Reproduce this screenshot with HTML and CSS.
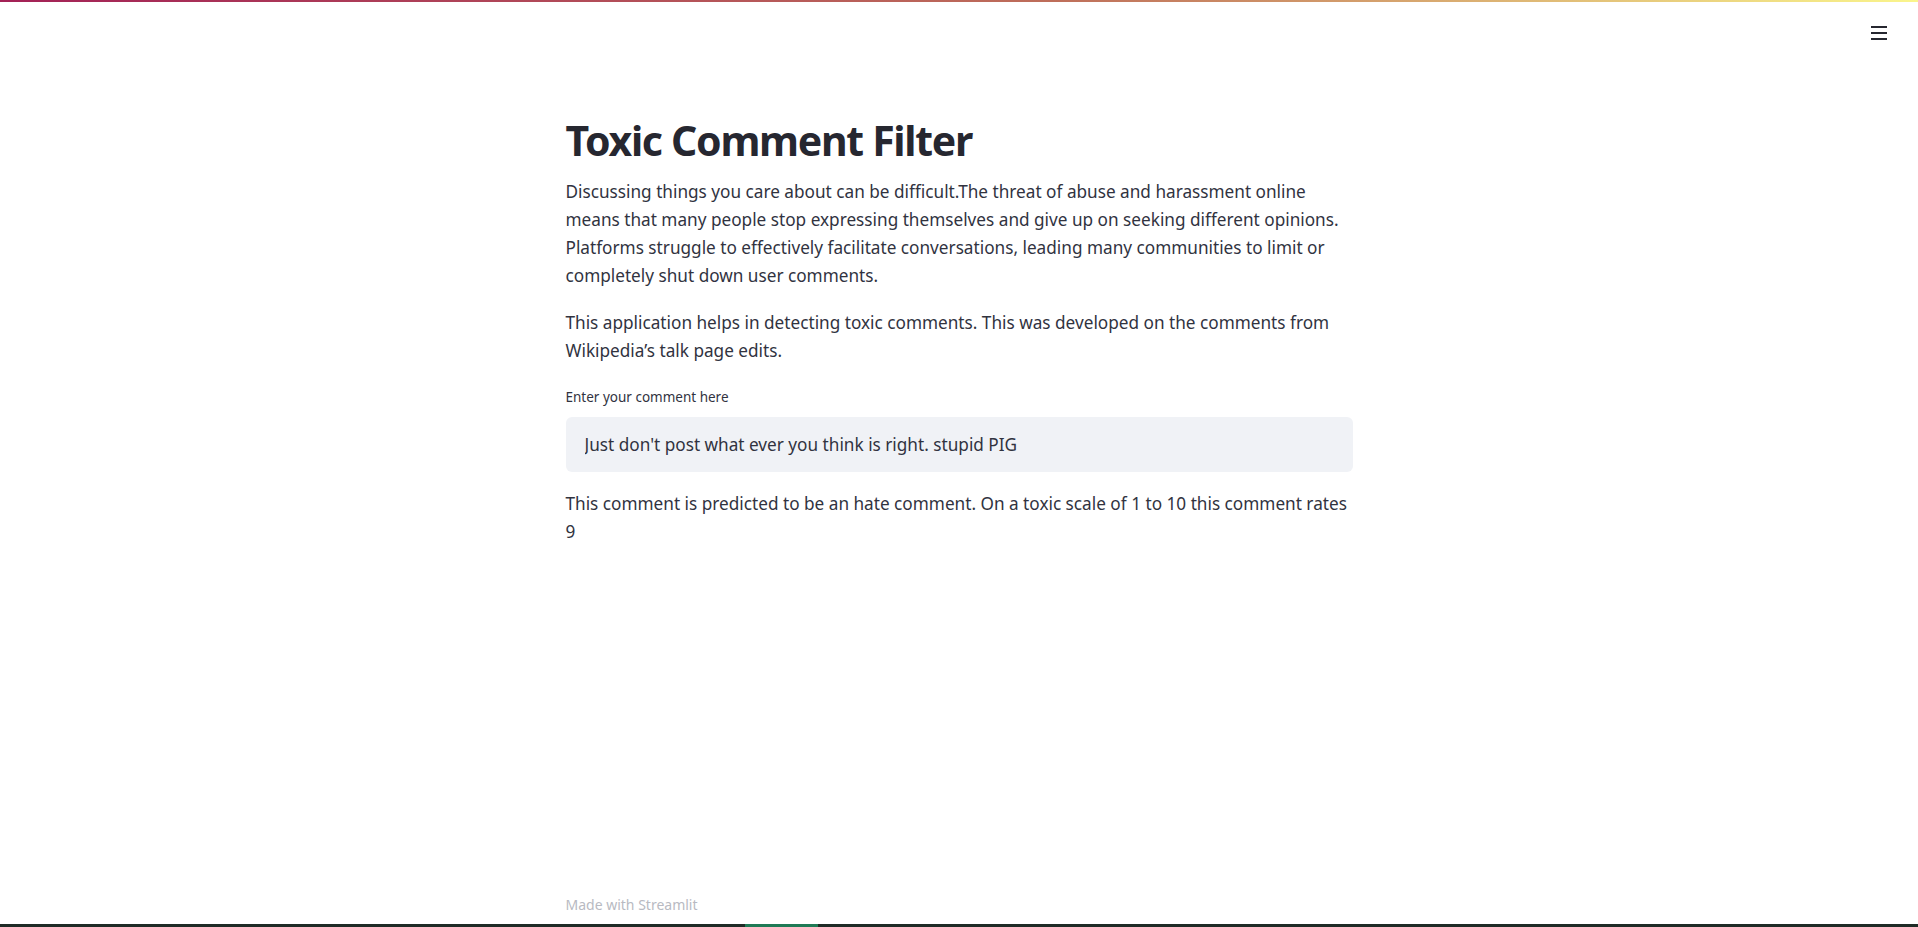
FILE: index.html
```html
<!DOCTYPE html>
<html lang="en">
<head>
<meta charset="utf-8">
<title>Toxic Comment Filter</title>
<link rel="stylesheet" href="styles.css">
</head>
<body>
<div class="app">
  <div class="decoration"></div>
  <header class="header">
    <button class="menu-btn" aria-label="Menu">
      <svg width="16" height="14" viewBox="0 0 16 14">
        <rect x="0" y="0" width="16" height="2" fill="#262730"/>
        <rect x="0" y="6" width="16" height="2" fill="#262730"/>
        <rect x="0" y="12" width="16" height="2" fill="#262730"/>
      </svg>
    </button>
  </header>
  <main class="main">
    <div class="block">
      <h1 class="title">Toxic Comment Filter</h1>
      <p class="para">Discussing things you care about can be difficult.The threat of abuse and harassment online means that many people stop expressing themselves and give up on seeking different opinions. Platforms struggle to effectively facilitate conversations, leading many communities to limit or completely shut down user comments.</p>
      <p class="para">This application helps in detecting toxic comments. This was developed on the comments from Wikipedia’s talk page edits.</p>
      <label class="label" for="comment">Enter your comment here</label>
      <input class="comment-input" id="comment" type="text" value="Just don't post what ever you think is right. stupid PIG">
      <p class="para result">This comment is predicted to be an hate comment. On a toxic scale of 1 to 10 this comment rates 9</p>
    </div>
  </main>
  <footer class="footer">
    <div class="block footer-text">Made with Streamlit</div>
  </footer>
  <div class="taskbar"><div class="taskbar-active"></div></div>
</div>
</body>
</html>
```
FILE: styles.css
```css
* { box-sizing: border-box; }
html, body { margin: 0; padding: 0; background: #ffffff; }
body {
  font-family: "Noto Sans", "Open Sans", sans-serif;
  color: rgb(49, 51, 63);
}
.app {
  min-height: 927px;
  display: flex;
  flex-direction: column;
}
.decoration {
  height: 2px;
  background: linear-gradient(90deg, rgb(163, 33, 86) 0%, rgb(190, 110, 90) 55%, rgb(250, 245, 140) 100%);
}
.header {
  height: 48px;
  display: flex;
  justify-content: flex-end;
  align-items: flex-start;
  padding: 22px 28px 0 0;
}
.menu-btn {
  border: none;
  background: transparent;
  padding: 2px 3px;
  display: flex;
  cursor: pointer;
}
.main { flex: 1; padding-top: 65px; }
.block {
  width: 787px;
  margin: 0 auto;
}
.title {
  margin: 0 0 13px 0;
  font-size: 41px;
  line-height: 50px;
  font-weight: 700;
  color: rgb(38, 39, 48);
  letter-spacing: -1.3px;
}
.para {
  margin: 0 0 19px 0;
  font-size: 17.2px;
  line-height: 28px;
}
.label {
  display: block;
  font-size: 13.5px;
  line-height: 20px;
  margin-top: 22px;
  margin-bottom: 10px;
  color: rgb(49, 51, 63);
}
.comment-input {
  display: block;
  width: 100%;
  height: 55px;
  border: none;
  outline: none;
  border-radius: 6px;
  background: rgb(240, 242, 246);
  padding: 0 19px;
  font-family: "Noto Sans", "Open Sans", sans-serif;
  font-size: 17.2px;
  color: rgb(49, 51, 63);
  margin-bottom: 18px;
}
.result { margin: 0; }
.footer { padding-bottom: 9px; }
.footer-text {
  font-size: 14px;
  line-height: 20px;
  color: rgb(184, 186, 194);
}
.taskbar {
  height: 3px;
  background: #1f2b26;
  display: flex;
  padding-left: 745px;
}
.taskbar-active {
  width: 73px;
  background: #1f7a55;
}
```
